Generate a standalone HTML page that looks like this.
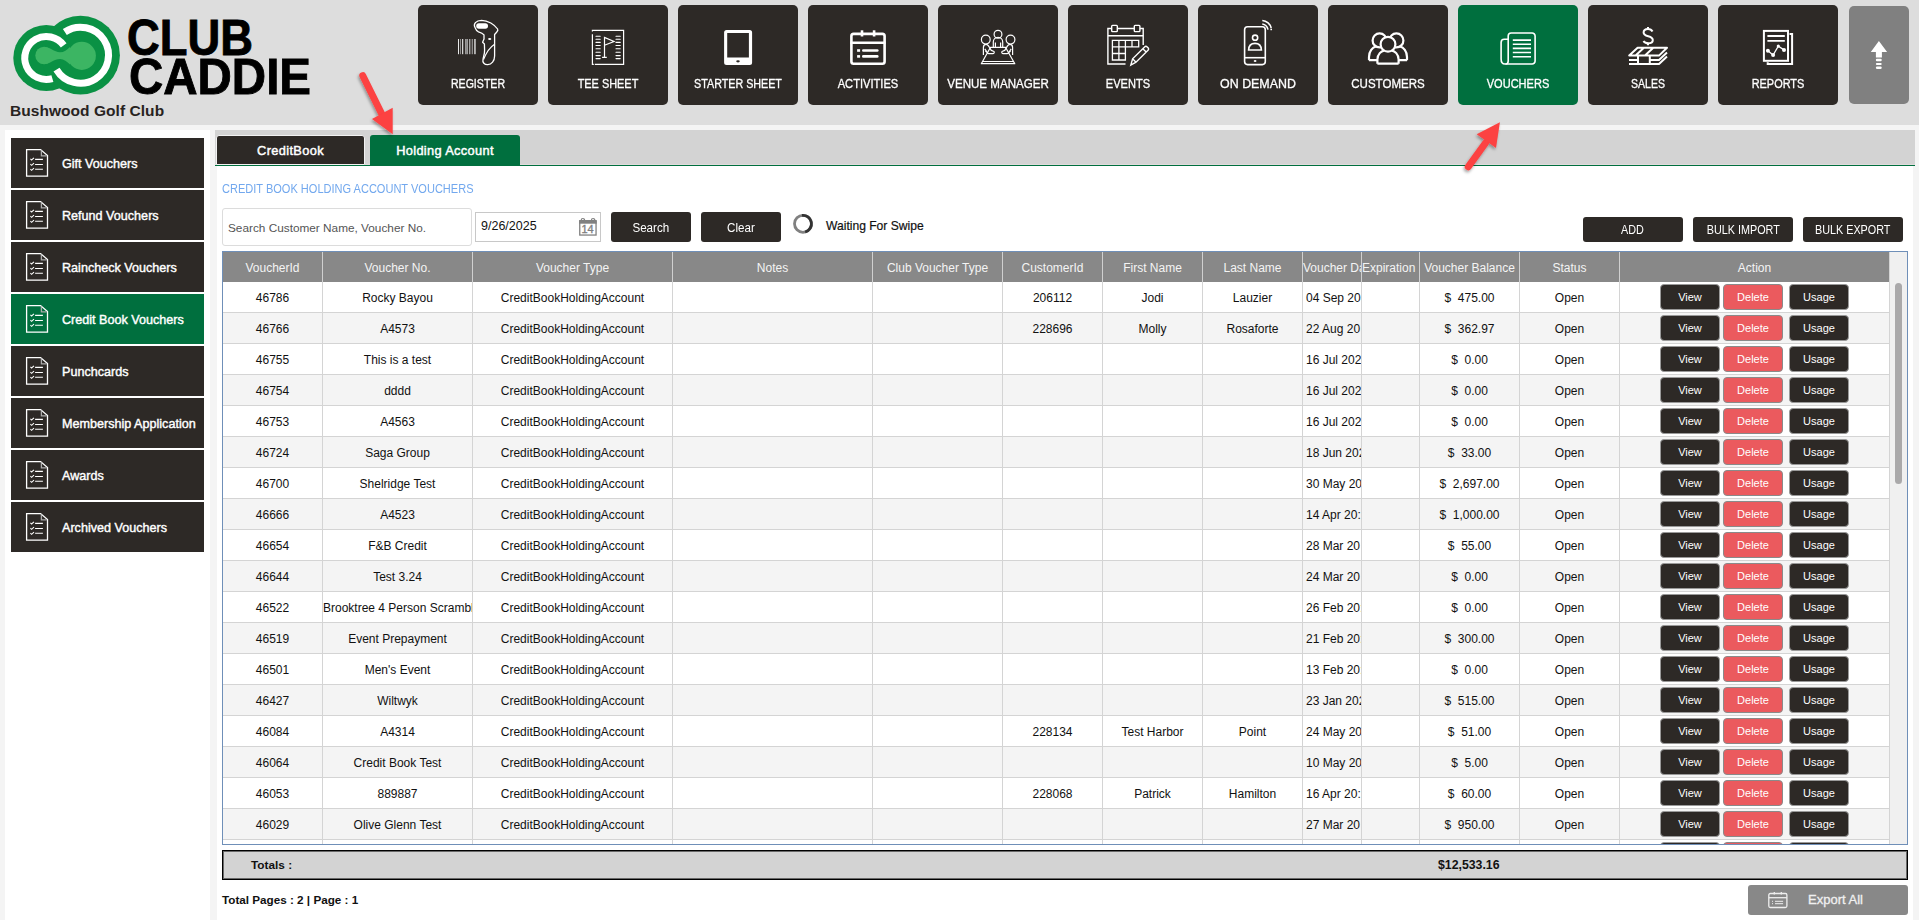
<!DOCTYPE html>
<html><head><meta charset="utf-8"><title>Vouchers</title><style>
*{box-sizing:border-box;margin:0;padding:0}
html,body{width:1919px;height:920px;overflow:hidden;background:#f4f4f4;font-family:"Liberation Sans", sans-serif;position:relative}
#header{position:absolute;left:0;top:0;width:1919px;height:125px;background:#dddddd}
#brand{position:absolute;left:10px;top:102px;font-weight:bold;font-size:15.5px;color:#28231f;white-space:nowrap;letter-spacing:0.05px}
.nav{position:absolute;top:5px;width:120px;height:100px;border-radius:5px;color:#fff}
.nav svg{position:absolute;left:0;top:0}
.nl{position:absolute;left:0;width:120px;top:72px;text-align:center;font-size:12.5px;font-weight:normal;-webkit-text-stroke:0.3px #fff;white-space:nowrap;line-height:14px;transform:scaleX(0.85);transform-origin:60px 0}
.navup{position:absolute;left:1849px;top:6px;width:60px;height:98px;border-radius:5px;background:#808080}
#sidepanel{position:absolute;left:5px;top:130px;width:205px;height:790px;background:#fff}
.sb{position:absolute;left:11px;width:193px;height:50px;color:#fff;overflow:hidden}
.sb svg{position:absolute;left:14px;top:10px}
.st{position:absolute;left:51px;top:19px;font-size:12.6px;font-weight:normal;-webkit-text-stroke:0.4px #fff;white-space:nowrap;line-height:14px}
#tabbar{position:absolute;left:215px;top:130px;width:1700px;height:35px;background:#d3d3d3;border-bottom:1px solid #e0dcdc}
#tabline{position:absolute;left:215px;top:165px;width:1700px;height:1px;background:#006f3e}
.tab{position:absolute;color:#fff;text-align:center;white-space:nowrap}
#tab1{left:216px;top:135px;width:149px;height:30px;background:#2d2926;border:1px solid #f2f2f2;border-radius:3px 3px 0 0;font-size:12.8px;letter-spacing:0.35px;-webkit-text-stroke:0.45px #fff;line-height:30px}
#tab2{left:370px;top:135px;width:150px;height:31px;background:#006f3e;border-radius:3px 3px 0 0;font-size:12.8px;letter-spacing:0.35px;-webkit-text-stroke:0.45px #fff;line-height:32px}
#content{position:absolute;left:217px;top:166px;width:1696px;height:754px;background:#fff}
#title{position:absolute;left:222px;top:182px;font-size:12.3px;color:#72a8ee;white-space:nowrap;line-height:14px;transform:scaleX(0.897);transform-origin:0 0}
#search{position:absolute;left:222px;top:208px;width:250px;height:38px;border:1px solid #dcdcdc;border-radius:3px;background:#fff}
#search span{position:absolute;left:5px;top:12px;font-size:11.8px;color:#555;white-space:nowrap;line-height:14px}
#date{position:absolute;left:475px;top:212px;width:126px;height:30px;border:1px solid #c8c8c8;background:#fff}
#date span{position:absolute;left:5px;top:6px;font-size:12.5px;color:#111;white-space:nowrap;line-height:14px}
#date svg{position:absolute;left:103px;top:5px}
.btn{position:absolute;background:#2d2926;color:#fff;border-radius:3px;text-align:center;font-size:11.5px;line-height:30px;white-space:nowrap}
.b2{top:217px;width:100px;height:25px;line-height:25px;font-size:11px}
.bs{display:inline-block;font-size:12.5px;line-height:32px;transform:scaleX(0.93)}
.bs2{display:inline-block;font-size:12.8px;line-height:26px;transform:scaleX(0.845)}
#wfs{position:absolute;left:826px;top:219px;font-size:12.1px;-webkit-text-stroke:0.2px #111;color:#111;white-space:nowrap;line-height:14px}
#tbl{position:absolute;left:222px;top:251px;width:1686px;height:594px;border:1px solid #6f8fb8;overflow:hidden;background:#fff}
#thead{position:absolute;left:0;top:0;width:1666px;height:30px;background:#888888}
.th{position:absolute;top:0;height:30px;line-height:32px;text-align:center;color:#f4f4f4;font-size:12px;border-left:1px solid #d0d0d0;white-space:nowrap;overflow:hidden}
.th:first-child{border-left:none}
.th.clip{text-align:left;padding-left:0}
.tr{position:absolute;left:0;width:1666px;height:31px;border-bottom:1px solid #d4d4d4}
.td{position:absolute;top:0;height:30px;line-height:32px;text-align:center;color:#111;font-size:12px;border-left:1px solid #d4d4d4;white-space:nowrap;overflow:hidden}
.tr .td:first-child{border-left:none}
.td.dl{text-align:left;padding-left:3px}
.ab{position:absolute;top:2px;width:60px;height:26px;border-radius:4px;background:#2d2926;color:#fff;font-size:11px;line-height:25px;text-align:center;border:1px solid #9a9a9a}
.ab.del{background:#eb5a5e;border-color:#8a8a8a}
#sbtrack{position:absolute;left:1666px;top:0;width:18px;height:592px;background:#f0f0f0;border-left:1px solid #d4d4d4}
#sbthumb{position:absolute;left:5px;top:31px;width:7px;height:201px;border-radius:4px;background:#aaa9aa}
#totals{position:absolute;left:222px;top:850px;width:1686px;height:30px;border:1px solid #000;box-shadow:inset 0 0 0 1px rgba(0,0,0,0.5);background:#d3d3d3}
#tl{position:absolute;left:28px;top:7px;font-weight:bold;font-size:11.8px;color:#111;line-height:14px}
#tv{position:absolute;left:1215px;top:7px;font-weight:bold;font-size:12.3px;color:#111;line-height:14px}
#pages{position:absolute;left:222px;top:893px;font-weight:bold;font-size:11.7px;color:#111;white-space:nowrap;line-height:14px}
#export{position:absolute;left:1748px;top:885px;width:160px;height:30px;border-radius:3px;background:#888;color:#f0f0f0}
#export span{position:absolute;left:60px;top:8px;font-size:13px;line-height:14px;-webkit-text-stroke:0.3px #f0f0f0}
#export svg{position:absolute;left:19px;top:6px}
#arrows{position:absolute;left:0;top:0}
</style></head>
<body><div id="header"></div><div id="brand">Bushwood Golf Club</div>
<svg style="position:absolute;left:0;top:0" width="320" height="100" viewBox="0 0 320 100">
<circle cx="46.3" cy="58" r="33" fill="#0a9144"/><circle cx="80.5" cy="55.2" r="39.4" fill="#0a9144"/>
<g fill="none" stroke="#fff" stroke-width="7">
<path d="M64.84 31.99 A28 28 0 1 1 56.5 69.6"/>
<path d="M63.7 45.4 A21.5 21.5 0 1 0 52.4 78.6"/>
</g>
<circle cx="44.1" cy="55.5" r="8.8" fill="#3cb563"/><circle cx="81.8" cy="55.85" r="14.1" fill="#3cb563"/>
<path d="M44 47 C50 47 54 52 60 52.3 C64 52.3 67 50 70 47 L70 64.5 C67 61.5 64 59 60 59 C54 59 50 64 44 64Z" fill="#3cb563"/>
<g font-family="Liberation Sans" font-weight="bold" font-size="50.5" fill="#000" stroke="#000" stroke-width="0.9">
<text x="127" y="54.8" textLength="126" lengthAdjust="spacingAndGlyphs">CLUB</text>
<text x="129" y="93.9" textLength="182" lengthAdjust="spacingAndGlyphs">CADDIE</text></g>
</svg><div class="nav" style="left:418px;background:#2d2926"><svg width="120" height="100" viewBox="0 0 120 100"><rect x="40.0" y="34" width="0.9" height="15.2" fill="#ffffff"/><rect x="42.3" y="34" width="0.7" height="15.2" fill="#bbb"/><rect x="44.2" y="34" width="1.0" height="15.2" fill="#ffffff"/><rect x="47.3" y="34" width="1.2" height="15.2" fill="#c8c8c8"/><rect x="48.7" y="34" width="1.2" height="15.2" fill="#aaa"/><rect x="51.3" y="34" width="1.0" height="15.2" fill="#ddd"/><rect x="53.8" y="34" width="0.8" height="15.2" fill="#ccc"/><rect x="56.3" y="34" width="1.3" height="15.2" fill="#eee"/><path d="M57 22.5 C55 19 58 15.5 63.5 15.3 C70 15.3 76.5 19.5 79.6 24 C80.2 25 79.8 26 78.6 27.2 L76.6 29.5 L76.6 51 C76.6 56 73.5 59.5 69.8 59.6 C66.5 59.8 64.2 57.5 65 54.3 C65.6 51.2 66.8 48 66.6 45 L66.4 39 L64.6 37.3 L66 34 L66 29.8 C64.5 28 62.2 27.3 60.5 26.8 C58.8 26.1 57.7 24.4 57 22.5Z" fill="none" stroke="#fff" stroke-width="1.3" stroke-linejoin="round"/><rect x="58.2" y="18.3" width="11.8" height="5.4" rx="2.7" fill="#fff"/><ellipse cx="71.7" cy="33.9" rx="1.6" ry="1" fill="#fff"/><path d="M76.3 39.4 C72 42 68.5 47 65.5 54.5" fill="none" stroke="#fff" stroke-width="1.2"/></svg><span class="nl" style="transform:scaleX(0.848)">REGISTER</span></div><div class="nav" style="left:548px;background:#2d2926"><svg width="120" height="100" viewBox="0 0 120 100"><g stroke="#fff" stroke-width="1.2" fill="none"><path d="M44.4 26.6 V25.3 H75.6 V59.4 H46.8 M44.4 29.3 V59.4 H45.8"/><g stroke-width="1.1" stroke-linecap="round"><line x1="48" y1="31.3" x2="52.2" y2="31.3"/><line x1="68" y1="31.3" x2="72.2" y2="31.3"/><line x1="48" y1="34.3" x2="52.2" y2="34.3"/><line x1="68" y1="34.3" x2="72.2" y2="34.3"/><line x1="48" y1="37.4" x2="52.2" y2="37.4"/><line x1="68" y1="37.4" x2="72.2" y2="37.4"/><line x1="48" y1="40.5" x2="52.2" y2="40.5"/><line x1="68" y1="40.5" x2="72.2" y2="40.5"/><line x1="48" y1="43.8" x2="52.2" y2="43.8"/><line x1="68" y1="43.8" x2="72.2" y2="43.8"/><line x1="48" y1="47.3" x2="52.2" y2="47.3"/><line x1="68" y1="47.3" x2="72.2" y2="47.3"/><line x1="48" y1="50.6" x2="52.2" y2="50.6"/><line x1="68" y1="50.6" x2="72.2" y2="50.6"/><line x1="48" y1="53.6" x2="52.2" y2="53.6"/><line x1="68" y1="53.6" x2="72.2" y2="53.6"/></g><path d="M56.5 52.5 V32.5 L66 36.5 L56.5 40.2 M54.1 52.4 H58.8"/></g></svg><span class="nl" style="transform:scaleX(0.873)">TEE SHEET</span></div><div class="nav" style="left:678px;background:#2d2926"><svg width="120" height="100" viewBox="0 0 120 100"><path fill="#fff" fill-rule="evenodd" d="M48.6 25 H71.6 A2.5 2.5 0 0 1 74.1 27.5 V57.6 A2.5 2.5 0 0 1 71.6 60.1 H48.6 A2.5 2.5 0 0 1 46.1 57.6 V27.5 A2.5 2.5 0 0 1 48.6 25Z M49.2 28 V52.5 H70.9 V28Z"/><ellipse cx="60" cy="56.3" rx="1.8" ry="1.1" fill="#2d2926"/></svg><span class="nl" style="transform:scaleX(0.858)">STARTER SHEET</span></div><div class="nav" style="left:808px;background:#2d2926"><svg width="120" height="100" viewBox="0 0 120 100"><g stroke="#fff" fill="none" stroke-width="2.6"><rect x="43.4" y="28.9" width="33.2" height="29.8" rx="2.2"/><line x1="42.5" y1="37.8" x2="77.5" y2="37.8"/><line x1="54" y1="25.3" x2="54" y2="31.5"/><line x1="66.1" y1="25.3" x2="66.1" y2="31.5"/></g><g fill="#fff"><rect x="49.1" y="44.2" width="3" height="2.6"/><rect x="49.1" y="50.1" width="3" height="2.6"/><rect x="54" y="44.2" width="16.6" height="2.6" rx="1.3"/><rect x="54" y="50.1" width="16.6" height="2.6" rx="1.3"/></g></svg><span class="nl" style="transform:scaleX(0.89)">ACTIVITIES</span></div><div class="nav" style="left:938px;background:#2d2926"><svg width="120" height="100" viewBox="0 0 120 100"><g stroke="#fff" fill="none" stroke-width="1.2" stroke-linejoin="round"><circle cx="60" cy="29.2" r="3.9"/><circle cx="47.8" cy="34.6" r="4.4"/><circle cx="72.5" cy="34.6" r="4.4"/><path d="M55.3 42 V37 A4.7 4.7 0 0 1 64.7 37 V42 M57.4 42 V37.6 M62.6 37.6 V42"/><path d="M52.5 42.3 H67.5 L76.8 58.7 H43.3 Z M44.6 56.5 H75.5"/><path d="M45.4 50 V42.5 C45.4 40 46.5 39.4 48 39.4 C49.5 39.4 50.8 41 51.5 42.6 L53.3 45.4 L56 46.5 C56.6 47.6 56 48.6 54.8 48.6 H50.5 L47.4 46 M46.8 43.8 L50 48.6"/><path d="M74.6 50 V42.5 C74.6 40 73.5 39.4 72 39.4 C70.5 39.4 69.2 41 68.5 42.6 L66.7 45.4 L64 46.5 C63.4 47.6 64 48.6 65.2 48.6 H69.5 L72.6 46 M73.2 43.8 L70 48.6"/></g></svg><span class="nl" style="transform:scaleX(0.926)">VENUE MANAGER</span></div><div class="nav" style="left:1068px;background:#2d2926"><svg width="120" height="100" viewBox="0 0 120 100"><g stroke="#fff" fill="none" stroke-width="1.4"><path d="M57.5 59 H39.9 V23.5 H75.2 V40"/><line x1="39.9" y1="30.8" x2="75.2" y2="30.8"/><rect x="43.7" y="20.4" width="5.6" height="6.2" rx="0.8" fill="#2d2926"/><rect x="66.3" y="20.4" width="5.6" height="6.2" rx="0.8" fill="#2d2926"/><path transform="translate(-0.6 0.6)" d="M63.4 59.5 L65.2 53.2 L77.2 41.3 C78 40.5 79 40.5 79.8 41.3 L80.6 42.1 C81.4 42.9 81.4 43.9 80.6 44.7 L68.6 56.6 Z M65.2 53.2 L68.6 56.6 M75.4 43.1 L78.8 46.5"/></g><g stroke="#fff" fill="none" stroke-width="1.3"><path d="M44.4 35.3 H70.7 V41.9 H57.4 V55 H44.4 Z M50.9 35.3 V55 M57.4 35.3 V41.9 M64 35.3 V41.9 M44.4 41.9 H57.4 M44.4 48.5 H57.4"/></g></svg><span class="nl" style="transform:scaleX(0.886)">EVENTS</span></div><div class="nav" style="left:1198px;background:#2d2926"><svg width="120" height="100" viewBox="0 0 120 100"><g stroke="#fff" fill="none" stroke-width="1.6"><rect x="46.6" y="21.8" width="20.7" height="37.8" rx="3"/><line x1="46.6" y1="52.7" x2="67.3" y2="52.7"/><circle cx="57.1" cy="32.7" r="2.6"/><path d="M50.6 45 C50.8 40.5 53.5 38.4 57 38.4 C60.5 38.4 63.2 40.5 63.4 45 Z"/><path d="M64.3 19 C67 19.4 69.3 21.6 70 24.6"/><path d="M64.3 15.5 C68.7 15.8 72.4 19.3 73.2 23"/></g><ellipse cx="57.1" cy="56" rx="1.4" ry="0.9" fill="#fff"/><circle cx="73.2" cy="24.4" r="0.9" fill="#fff"/></svg><span class="nl" style="transform:scaleX(0.993)">ON DEMAND</span></div><div class="nav" style="left:1328px;background:#2d2926"><svg width="120" height="100" viewBox="0 0 120 100"><g stroke="#fff" fill="#2d2926" stroke-width="2.2" stroke-linejoin="round"><path d="M41 55.2 V52 C41 46 44.5 42.3 48 41.5 M79 55.2 V52 C79 46 75.5 42.3 72 41.5 M41 55.2 H49.4 M79 55.2 H70.6" fill="none"/><circle cx="51.6" cy="35.4" r="7"/><circle cx="68.4" cy="35.4" r="7"/><circle cx="60" cy="39.2" r="7.4"/><path d="M49.4 58.7 V54.5 C49.4 49 53.5 46 56 45.6 M70.6 58.7 V54.5 C70.6 49 66.5 46 64 45.6 M49.4 58.7 H70.6" fill="none"/></g></svg><span class="nl" style="transform:scaleX(0.922)">CUSTOMERS</span></div><div class="nav" style="left:1458px;background:#006f3e"><svg width="120" height="100" viewBox="0 0 120 100"><g stroke="#fff" fill="none" stroke-width="1.6"><path d="M50.2 56 V31 A3 3 0 0 1 53.2 28 H74.1 A3 3 0 0 1 77.1 31 V56 A3 3 0 0 1 74.1 59 H47 C44.5 59 43.1 57 43.1 54 V37.5 C43.1 35.5 44.3 34.3 46.3 34.3 H50.2"/><path d="M50.2 56 C50.2 57.8 49.4 59 47.5 59"/><path d="M54.8 35.1 H73 M54.8 39.3 H73 M54.8 43.4 H73 M54.8 47.5 H73 M54.8 51.8 H73"/></g></svg><span class="nl" style="transform:scaleX(0.883)">VOUCHERS</span></div><div class="nav" style="left:1588px;background:#2d2926"><svg width="120" height="100" viewBox="0 0 120 100"><g stroke="#fff" fill="none" stroke-width="2" stroke-linejoin="round"><path d="M64.5 26.5 C63.5 24.5 62 24 60 24 C57.3 24 55.6 25.4 55.6 27.5 C55.6 32.5 64.8 30 64.8 35 C64.8 37.3 63 38.3 60.3 38.3 C58 38.3 56.5 37.8 55.5 36"/><line x1="60" y1="22" x2="60" y2="24"/><line x1="60" y1="38.3" x2="60" y2="40.3"/><path d="M41.2 50.6 L49.6 42.7 H79 L71 50.6 Z M55.6 43 L47.6 50.5 M65 43 L57 50.5"/><path d="M41 55 H50 M61.8 55 H71 L79 47.6 M41 59 H71 L79 51.5 M50 51 V58.6 M61.8 51 V58.6 M71 50.6 V51"/></g></svg><span class="nl" style="transform:scaleX(0.843)">SALES</span></div><div class="nav" style="left:1718px;background:#2d2926"><svg width="120" height="100" viewBox="0 0 120 100"><g stroke="#fff" fill="none" stroke-width="2"><rect x="45.9" y="25.9" width="24.1" height="29.9"/><path d="M71.5 29 H74.1 V59 H49.7 V57.2"/><path d="M49.4 31 H66.8 M49.4 35.9 H66.8" stroke-width="1.9"/><path d="M49.9 45.7 L55.1 50.1 L60.3 41.1 L66 44.9" stroke-width="1.3"/></g><g fill="#fff"><circle cx="49.9" cy="45.7" r="2"/><circle cx="55.1" cy="50.1" r="2"/><circle cx="60.3" cy="41.1" r="1.6"/><circle cx="66" cy="44.9" r="2"/></g></svg><span class="nl" style="transform:scaleX(0.875)">REPORTS</span></div><div class="navup"><svg width="60" height="98" viewBox="0 0 60 98" style="position:absolute;left:0;top:0"><g fill="#fff"><path d="M29.9 35.1 L38.1 46 H32.9 V51.4 H26.9 V46 H21.8 Z"/><rect x="26.9" y="52.8" width="5.8" height="2.5" rx="1"/><rect x="26.9" y="56.9" width="5.8" height="2.2" rx="1"/><rect x="26.9" y="60.4" width="5.8" height="2.5" rx="1.2"/></g></svg></div><div id="sidepanel"></div><div class="sb" style="top:138px;background:#2d2926"><svg width="50" height="50" viewBox="0 0 50 50" style="position:absolute;left:0;top:0"><g stroke="#fff" fill="none" stroke-width="1.3"><path d="M15.6 11.6 H29.6 L36.5 17.6 V38.2 H15.6 Z"/><path d="M30.4 12.5 V17.8 H35.7" stroke="#aaa"/><path d="M19.4 20.8 L20.6 21.9 L23 19.8 M19.4 26.2 L20.6 27.3 L23 25.2 M19.4 31.2 L20.6 32.3 L23 30.2" stroke-width="1.1"/><path d="M24.1 21.4 H31.9 M24.1 26.5 H31.9 M24.1 31.3 H31.9" stroke-width="1.1"/></g></svg><span class="st">Gift Vouchers</span></div><div class="sb" style="top:190px;background:#2d2926"><svg width="50" height="50" viewBox="0 0 50 50" style="position:absolute;left:0;top:0"><g stroke="#fff" fill="none" stroke-width="1.3"><path d="M15.6 11.6 H29.6 L36.5 17.6 V38.2 H15.6 Z"/><path d="M30.4 12.5 V17.8 H35.7" stroke="#aaa"/><path d="M19.4 20.8 L20.6 21.9 L23 19.8 M19.4 26.2 L20.6 27.3 L23 25.2 M19.4 31.2 L20.6 32.3 L23 30.2" stroke-width="1.1"/><path d="M24.1 21.4 H31.9 M24.1 26.5 H31.9 M24.1 31.3 H31.9" stroke-width="1.1"/></g></svg><span class="st">Refund Vouchers</span></div><div class="sb" style="top:242px;background:#2d2926"><svg width="50" height="50" viewBox="0 0 50 50" style="position:absolute;left:0;top:0"><g stroke="#fff" fill="none" stroke-width="1.3"><path d="M15.6 11.6 H29.6 L36.5 17.6 V38.2 H15.6 Z"/><path d="M30.4 12.5 V17.8 H35.7" stroke="#aaa"/><path d="M19.4 20.8 L20.6 21.9 L23 19.8 M19.4 26.2 L20.6 27.3 L23 25.2 M19.4 31.2 L20.6 32.3 L23 30.2" stroke-width="1.1"/><path d="M24.1 21.4 H31.9 M24.1 26.5 H31.9 M24.1 31.3 H31.9" stroke-width="1.1"/></g></svg><span class="st">Raincheck Vouchers</span></div><div class="sb" style="top:294px;background:#006f3e"><svg width="50" height="50" viewBox="0 0 50 50" style="position:absolute;left:0;top:0"><g stroke="#fff" fill="none" stroke-width="1.3"><path d="M15.6 11.6 H29.6 L36.5 17.6 V38.2 H15.6 Z"/><path d="M30.4 12.5 V17.8 H35.7" stroke="#aaa"/><path d="M19.4 20.8 L20.6 21.9 L23 19.8 M19.4 26.2 L20.6 27.3 L23 25.2 M19.4 31.2 L20.6 32.3 L23 30.2" stroke-width="1.1"/><path d="M24.1 21.4 H31.9 M24.1 26.5 H31.9 M24.1 31.3 H31.9" stroke-width="1.1"/></g></svg><span class="st">Credit Book Vouchers</span></div><div class="sb" style="top:346px;background:#2d2926"><svg width="50" height="50" viewBox="0 0 50 50" style="position:absolute;left:0;top:0"><g stroke="#fff" fill="none" stroke-width="1.3"><path d="M15.6 11.6 H29.6 L36.5 17.6 V38.2 H15.6 Z"/><path d="M30.4 12.5 V17.8 H35.7" stroke="#aaa"/><path d="M19.4 20.8 L20.6 21.9 L23 19.8 M19.4 26.2 L20.6 27.3 L23 25.2 M19.4 31.2 L20.6 32.3 L23 30.2" stroke-width="1.1"/><path d="M24.1 21.4 H31.9 M24.1 26.5 H31.9 M24.1 31.3 H31.9" stroke-width="1.1"/></g></svg><span class="st">Punchcards</span></div><div class="sb" style="top:398px;background:#2d2926"><svg width="50" height="50" viewBox="0 0 50 50" style="position:absolute;left:0;top:0"><g stroke="#fff" fill="none" stroke-width="1.3"><path d="M15.6 11.6 H29.6 L36.5 17.6 V38.2 H15.6 Z"/><path d="M30.4 12.5 V17.8 H35.7" stroke="#aaa"/><path d="M19.4 20.8 L20.6 21.9 L23 19.8 M19.4 26.2 L20.6 27.3 L23 25.2 M19.4 31.2 L20.6 32.3 L23 30.2" stroke-width="1.1"/><path d="M24.1 21.4 H31.9 M24.1 26.5 H31.9 M24.1 31.3 H31.9" stroke-width="1.1"/></g></svg><span class="st">Membership Application</span></div><div class="sb" style="top:450px;background:#2d2926"><svg width="50" height="50" viewBox="0 0 50 50" style="position:absolute;left:0;top:0"><g stroke="#fff" fill="none" stroke-width="1.3"><path d="M15.6 11.6 H29.6 L36.5 17.6 V38.2 H15.6 Z"/><path d="M30.4 12.5 V17.8 H35.7" stroke="#aaa"/><path d="M19.4 20.8 L20.6 21.9 L23 19.8 M19.4 26.2 L20.6 27.3 L23 25.2 M19.4 31.2 L20.6 32.3 L23 30.2" stroke-width="1.1"/><path d="M24.1 21.4 H31.9 M24.1 26.5 H31.9 M24.1 31.3 H31.9" stroke-width="1.1"/></g></svg><span class="st">Awards</span></div><div class="sb" style="top:502px;background:#2d2926"><svg width="50" height="50" viewBox="0 0 50 50" style="position:absolute;left:0;top:0"><g stroke="#fff" fill="none" stroke-width="1.3"><path d="M15.6 11.6 H29.6 L36.5 17.6 V38.2 H15.6 Z"/><path d="M30.4 12.5 V17.8 H35.7" stroke="#aaa"/><path d="M19.4 20.8 L20.6 21.9 L23 19.8 M19.4 26.2 L20.6 27.3 L23 25.2 M19.4 31.2 L20.6 32.3 L23 30.2" stroke-width="1.1"/><path d="M24.1 21.4 H31.9 M24.1 26.5 H31.9 M24.1 31.3 H31.9" stroke-width="1.1"/></g></svg><span class="st">Archived Vouchers</span></div><div id="tabbar"></div><div id="tabline"></div><div class="tab" id="tab1">CreditBook</div><div class="tab" id="tab2">Holding Account</div><div id="content"></div><div id="title">CREDIT BOOK HOLDING ACCOUNT VOUCHERS</div><div id="search"><span>Search Customer Name, Voucher No.</span></div><div id="date"><span>9/26/2025</span><svg width="126" height="30" viewBox="0 0 126 30" style="position:absolute;left:-1px;top:-1px"><g stroke="#808080" fill="none" stroke-width="1.3"><rect x="104.75" y="8.65" width="16.3" height="14.4"/><path d="M106.2 9 V8.2 A1.7 1.7 0 0 1 109.6 8.2 V9 M116.4 9 V8.2 A1.7 1.7 0 0 1 119.8 8.2 V9" stroke-width="1.2"/></g><rect x="104.1" y="8.6" width="17.6" height="3.1" fill="#808080"/><text x="112.6" y="21.3" font-family="Liberation Sans" font-size="11" fill="#808080" stroke="#808080" stroke-width="0.35" text-anchor="middle">14</text></svg></div><div class="btn" style="left:611px;top:212px;width:80px;height:30px"><span class="bs">Search</span></div><div class="btn" style="left:701px;top:212px;width:80px;height:30px"><span class="bs">Clear</span></div><svg id="spin" width="24" height="24" viewBox="0 0 24 24" style="position:absolute;left:791px;top:212px"><circle cx="12" cy="11.8" r="8.5" fill="none" stroke="#808080" stroke-width="2.8"/><path d="M10.96 3.36 A8.5 8.5 0 0 1 14.2 20.0" fill="none" stroke="#333" stroke-width="2.8"/></svg><div id="wfs">Waiting For Swipe</div><div class="btn b2" style="left:1583px"><span class="bs2">ADD</span></div><div class="btn b2" style="left:1693px"><span class="bs2">BULK IMPORT</span></div><div class="btn b2" style="left:1803px"><span class="bs2">BULK EXPORT</span></div><div id="tbl"><div id="thead"><div class="th" style="left:0px;width:99px">VoucherId</div><div class="th" style="left:99px;width:150px">Voucher No.</div><div class="th" style="left:249px;width:200px">Voucher Type</div><div class="th" style="left:449px;width:200px">Notes</div><div class="th" style="left:649px;width:130px">Club Voucher Type</div><div class="th" style="left:779px;width:100px">CustomerId</div><div class="th" style="left:879px;width:100px">First Name</div><div class="th" style="left:979px;width:100px">Last Name</div><div class="th clip" style="left:1079px;width:59px">Voucher Date</div><div class="th clip" style="left:1138px;width:58px">Expiration Date</div><div class="th" style="left:1196px;width:100px">Voucher Balance</div><div class="th" style="left:1296px;width:100px">Status</div><div class="th" style="left:1396px;width:270px">Action</div></div><div class="tr" style="top:30px;background:#ffffff"><div class="td" style="left:0px;width:99px">46786</div><div class="td" style="left:99px;width:150px">Rocky Bayou</div><div class="td" style="left:249px;width:200px">CreditBookHoldingAccount</div><div class="td" style="left:449px;width:200px"></div><div class="td" style="left:649px;width:130px"></div><div class="td" style="left:779px;width:100px">206112</div><div class="td" style="left:879px;width:100px">Jodi</div><div class="td" style="left:979px;width:100px">Lauzier</div><div class="td dl" style="left:1079px;width:59px">04 Sep 20:</div><div class="td" style="left:1138px;width:58px"></div><div class="td" style="left:1196px;width:100px">$&nbsp; 475.00</div><div class="td" style="left:1296px;width:100px">Open</div><div class="td" style="left:1396px;width:270px"></div><div class="ab" style="left:1437px">View</div><div class="ab del" style="left:1500px">Delete</div><div class="ab" style="left:1566px">Usage</div></div><div class="tr" style="top:61px;background:#f4f4f4"><div class="td" style="left:0px;width:99px">46766</div><div class="td" style="left:99px;width:150px">A4573</div><div class="td" style="left:249px;width:200px">CreditBookHoldingAccount</div><div class="td" style="left:449px;width:200px"></div><div class="td" style="left:649px;width:130px"></div><div class="td" style="left:779px;width:100px">228696</div><div class="td" style="left:879px;width:100px">Molly</div><div class="td" style="left:979px;width:100px">Rosaforte</div><div class="td dl" style="left:1079px;width:59px">22 Aug 20</div><div class="td" style="left:1138px;width:58px"></div><div class="td" style="left:1196px;width:100px">$&nbsp; 362.97</div><div class="td" style="left:1296px;width:100px">Open</div><div class="td" style="left:1396px;width:270px"></div><div class="ab" style="left:1437px">View</div><div class="ab del" style="left:1500px">Delete</div><div class="ab" style="left:1566px">Usage</div></div><div class="tr" style="top:92px;background:#ffffff"><div class="td" style="left:0px;width:99px">46755</div><div class="td" style="left:99px;width:150px">This is a test</div><div class="td" style="left:249px;width:200px">CreditBookHoldingAccount</div><div class="td" style="left:449px;width:200px"></div><div class="td" style="left:649px;width:130px"></div><div class="td" style="left:779px;width:100px"></div><div class="td" style="left:879px;width:100px"></div><div class="td" style="left:979px;width:100px"></div><div class="td dl" style="left:1079px;width:59px">16 Jul 202</div><div class="td" style="left:1138px;width:58px"></div><div class="td" style="left:1196px;width:100px">$&nbsp; 0.00</div><div class="td" style="left:1296px;width:100px">Open</div><div class="td" style="left:1396px;width:270px"></div><div class="ab" style="left:1437px">View</div><div class="ab del" style="left:1500px">Delete</div><div class="ab" style="left:1566px">Usage</div></div><div class="tr" style="top:123px;background:#f4f4f4"><div class="td" style="left:0px;width:99px">46754</div><div class="td" style="left:99px;width:150px">dddd</div><div class="td" style="left:249px;width:200px">CreditBookHoldingAccount</div><div class="td" style="left:449px;width:200px"></div><div class="td" style="left:649px;width:130px"></div><div class="td" style="left:779px;width:100px"></div><div class="td" style="left:879px;width:100px"></div><div class="td" style="left:979px;width:100px"></div><div class="td dl" style="left:1079px;width:59px">16 Jul 202</div><div class="td" style="left:1138px;width:58px"></div><div class="td" style="left:1196px;width:100px">$&nbsp; 0.00</div><div class="td" style="left:1296px;width:100px">Open</div><div class="td" style="left:1396px;width:270px"></div><div class="ab" style="left:1437px">View</div><div class="ab del" style="left:1500px">Delete</div><div class="ab" style="left:1566px">Usage</div></div><div class="tr" style="top:154px;background:#ffffff"><div class="td" style="left:0px;width:99px">46753</div><div class="td" style="left:99px;width:150px">A4563</div><div class="td" style="left:249px;width:200px">CreditBookHoldingAccount</div><div class="td" style="left:449px;width:200px"></div><div class="td" style="left:649px;width:130px"></div><div class="td" style="left:779px;width:100px"></div><div class="td" style="left:879px;width:100px"></div><div class="td" style="left:979px;width:100px"></div><div class="td dl" style="left:1079px;width:59px">16 Jul 202</div><div class="td" style="left:1138px;width:58px"></div><div class="td" style="left:1196px;width:100px">$&nbsp; 0.00</div><div class="td" style="left:1296px;width:100px">Open</div><div class="td" style="left:1396px;width:270px"></div><div class="ab" style="left:1437px">View</div><div class="ab del" style="left:1500px">Delete</div><div class="ab" style="left:1566px">Usage</div></div><div class="tr" style="top:185px;background:#f4f4f4"><div class="td" style="left:0px;width:99px">46724</div><div class="td" style="left:99px;width:150px">Saga Group</div><div class="td" style="left:249px;width:200px">CreditBookHoldingAccount</div><div class="td" style="left:449px;width:200px"></div><div class="td" style="left:649px;width:130px"></div><div class="td" style="left:779px;width:100px"></div><div class="td" style="left:879px;width:100px"></div><div class="td" style="left:979px;width:100px"></div><div class="td dl" style="left:1079px;width:59px">18 Jun 202</div><div class="td" style="left:1138px;width:58px"></div><div class="td" style="left:1196px;width:100px">$&nbsp; 33.00</div><div class="td" style="left:1296px;width:100px">Open</div><div class="td" style="left:1396px;width:270px"></div><div class="ab" style="left:1437px">View</div><div class="ab del" style="left:1500px">Delete</div><div class="ab" style="left:1566px">Usage</div></div><div class="tr" style="top:216px;background:#ffffff"><div class="td" style="left:0px;width:99px">46700</div><div class="td" style="left:99px;width:150px">Shelridge Test</div><div class="td" style="left:249px;width:200px">CreditBookHoldingAccount</div><div class="td" style="left:449px;width:200px"></div><div class="td" style="left:649px;width:130px"></div><div class="td" style="left:779px;width:100px"></div><div class="td" style="left:879px;width:100px"></div><div class="td" style="left:979px;width:100px"></div><div class="td dl" style="left:1079px;width:59px">30 May 20</div><div class="td" style="left:1138px;width:58px"></div><div class="td" style="left:1196px;width:100px">$&nbsp; 2,697.00</div><div class="td" style="left:1296px;width:100px">Open</div><div class="td" style="left:1396px;width:270px"></div><div class="ab" style="left:1437px">View</div><div class="ab del" style="left:1500px">Delete</div><div class="ab" style="left:1566px">Usage</div></div><div class="tr" style="top:247px;background:#f4f4f4"><div class="td" style="left:0px;width:99px">46666</div><div class="td" style="left:99px;width:150px">A4523</div><div class="td" style="left:249px;width:200px">CreditBookHoldingAccount</div><div class="td" style="left:449px;width:200px"></div><div class="td" style="left:649px;width:130px"></div><div class="td" style="left:779px;width:100px"></div><div class="td" style="left:879px;width:100px"></div><div class="td" style="left:979px;width:100px"></div><div class="td dl" style="left:1079px;width:59px">14 Apr 20:</div><div class="td" style="left:1138px;width:58px"></div><div class="td" style="left:1196px;width:100px">$&nbsp; 1,000.00</div><div class="td" style="left:1296px;width:100px">Open</div><div class="td" style="left:1396px;width:270px"></div><div class="ab" style="left:1437px">View</div><div class="ab del" style="left:1500px">Delete</div><div class="ab" style="left:1566px">Usage</div></div><div class="tr" style="top:278px;background:#ffffff"><div class="td" style="left:0px;width:99px">46654</div><div class="td" style="left:99px;width:150px">F&amp;B Credit</div><div class="td" style="left:249px;width:200px">CreditBookHoldingAccount</div><div class="td" style="left:449px;width:200px"></div><div class="td" style="left:649px;width:130px"></div><div class="td" style="left:779px;width:100px"></div><div class="td" style="left:879px;width:100px"></div><div class="td" style="left:979px;width:100px"></div><div class="td dl" style="left:1079px;width:59px">28 Mar 20</div><div class="td" style="left:1138px;width:58px"></div><div class="td" style="left:1196px;width:100px">$&nbsp; 55.00</div><div class="td" style="left:1296px;width:100px">Open</div><div class="td" style="left:1396px;width:270px"></div><div class="ab" style="left:1437px">View</div><div class="ab del" style="left:1500px">Delete</div><div class="ab" style="left:1566px">Usage</div></div><div class="tr" style="top:309px;background:#f4f4f4"><div class="td" style="left:0px;width:99px">46644</div><div class="td" style="left:99px;width:150px">Test 3.24</div><div class="td" style="left:249px;width:200px">CreditBookHoldingAccount</div><div class="td" style="left:449px;width:200px"></div><div class="td" style="left:649px;width:130px"></div><div class="td" style="left:779px;width:100px"></div><div class="td" style="left:879px;width:100px"></div><div class="td" style="left:979px;width:100px"></div><div class="td dl" style="left:1079px;width:59px">24 Mar 20</div><div class="td" style="left:1138px;width:58px"></div><div class="td" style="left:1196px;width:100px">$&nbsp; 0.00</div><div class="td" style="left:1296px;width:100px">Open</div><div class="td" style="left:1396px;width:270px"></div><div class="ab" style="left:1437px">View</div><div class="ab del" style="left:1500px">Delete</div><div class="ab" style="left:1566px">Usage</div></div><div class="tr" style="top:340px;background:#ffffff"><div class="td" style="left:0px;width:99px">46522</div><div class="td" style="left:99px;width:150px">Brooktree 4 Person Scrambl</div><div class="td" style="left:249px;width:200px">CreditBookHoldingAccount</div><div class="td" style="left:449px;width:200px"></div><div class="td" style="left:649px;width:130px"></div><div class="td" style="left:779px;width:100px"></div><div class="td" style="left:879px;width:100px"></div><div class="td" style="left:979px;width:100px"></div><div class="td dl" style="left:1079px;width:59px">26 Feb 20:</div><div class="td" style="left:1138px;width:58px"></div><div class="td" style="left:1196px;width:100px">$&nbsp; 0.00</div><div class="td" style="left:1296px;width:100px">Open</div><div class="td" style="left:1396px;width:270px"></div><div class="ab" style="left:1437px">View</div><div class="ab del" style="left:1500px">Delete</div><div class="ab" style="left:1566px">Usage</div></div><div class="tr" style="top:371px;background:#f4f4f4"><div class="td" style="left:0px;width:99px">46519</div><div class="td" style="left:99px;width:150px">Event Prepayment</div><div class="td" style="left:249px;width:200px">CreditBookHoldingAccount</div><div class="td" style="left:449px;width:200px"></div><div class="td" style="left:649px;width:130px"></div><div class="td" style="left:779px;width:100px"></div><div class="td" style="left:879px;width:100px"></div><div class="td" style="left:979px;width:100px"></div><div class="td dl" style="left:1079px;width:59px">21 Feb 20:</div><div class="td" style="left:1138px;width:58px"></div><div class="td" style="left:1196px;width:100px">$&nbsp; 300.00</div><div class="td" style="left:1296px;width:100px">Open</div><div class="td" style="left:1396px;width:270px"></div><div class="ab" style="left:1437px">View</div><div class="ab del" style="left:1500px">Delete</div><div class="ab" style="left:1566px">Usage</div></div><div class="tr" style="top:402px;background:#ffffff"><div class="td" style="left:0px;width:99px">46501</div><div class="td" style="left:99px;width:150px">Men's Event</div><div class="td" style="left:249px;width:200px">CreditBookHoldingAccount</div><div class="td" style="left:449px;width:200px"></div><div class="td" style="left:649px;width:130px"></div><div class="td" style="left:779px;width:100px"></div><div class="td" style="left:879px;width:100px"></div><div class="td" style="left:979px;width:100px"></div><div class="td dl" style="left:1079px;width:59px">13 Feb 20:</div><div class="td" style="left:1138px;width:58px"></div><div class="td" style="left:1196px;width:100px">$&nbsp; 0.00</div><div class="td" style="left:1296px;width:100px">Open</div><div class="td" style="left:1396px;width:270px"></div><div class="ab" style="left:1437px">View</div><div class="ab del" style="left:1500px">Delete</div><div class="ab" style="left:1566px">Usage</div></div><div class="tr" style="top:433px;background:#f4f4f4"><div class="td" style="left:0px;width:99px">46427</div><div class="td" style="left:99px;width:150px">Wiltwyk</div><div class="td" style="left:249px;width:200px">CreditBookHoldingAccount</div><div class="td" style="left:449px;width:200px"></div><div class="td" style="left:649px;width:130px"></div><div class="td" style="left:779px;width:100px"></div><div class="td" style="left:879px;width:100px"></div><div class="td" style="left:979px;width:100px"></div><div class="td dl" style="left:1079px;width:59px">23 Jan 202</div><div class="td" style="left:1138px;width:58px"></div><div class="td" style="left:1196px;width:100px">$&nbsp; 515.00</div><div class="td" style="left:1296px;width:100px">Open</div><div class="td" style="left:1396px;width:270px"></div><div class="ab" style="left:1437px">View</div><div class="ab del" style="left:1500px">Delete</div><div class="ab" style="left:1566px">Usage</div></div><div class="tr" style="top:464px;background:#ffffff"><div class="td" style="left:0px;width:99px">46084</div><div class="td" style="left:99px;width:150px">A4314</div><div class="td" style="left:249px;width:200px">CreditBookHoldingAccount</div><div class="td" style="left:449px;width:200px"></div><div class="td" style="left:649px;width:130px"></div><div class="td" style="left:779px;width:100px">228134</div><div class="td" style="left:879px;width:100px">Test Harbor</div><div class="td" style="left:979px;width:100px">Point</div><div class="td dl" style="left:1079px;width:59px">24 May 20</div><div class="td" style="left:1138px;width:58px"></div><div class="td" style="left:1196px;width:100px">$&nbsp; 51.00</div><div class="td" style="left:1296px;width:100px">Open</div><div class="td" style="left:1396px;width:270px"></div><div class="ab" style="left:1437px">View</div><div class="ab del" style="left:1500px">Delete</div><div class="ab" style="left:1566px">Usage</div></div><div class="tr" style="top:495px;background:#f4f4f4"><div class="td" style="left:0px;width:99px">46064</div><div class="td" style="left:99px;width:150px">Credit Book Test</div><div class="td" style="left:249px;width:200px">CreditBookHoldingAccount</div><div class="td" style="left:449px;width:200px"></div><div class="td" style="left:649px;width:130px"></div><div class="td" style="left:779px;width:100px"></div><div class="td" style="left:879px;width:100px"></div><div class="td" style="left:979px;width:100px"></div><div class="td dl" style="left:1079px;width:59px">10 May 20</div><div class="td" style="left:1138px;width:58px"></div><div class="td" style="left:1196px;width:100px">$&nbsp; 5.00</div><div class="td" style="left:1296px;width:100px">Open</div><div class="td" style="left:1396px;width:270px"></div><div class="ab" style="left:1437px">View</div><div class="ab del" style="left:1500px">Delete</div><div class="ab" style="left:1566px">Usage</div></div><div class="tr" style="top:526px;background:#ffffff"><div class="td" style="left:0px;width:99px">46053</div><div class="td" style="left:99px;width:150px">889887</div><div class="td" style="left:249px;width:200px">CreditBookHoldingAccount</div><div class="td" style="left:449px;width:200px"></div><div class="td" style="left:649px;width:130px"></div><div class="td" style="left:779px;width:100px">228068</div><div class="td" style="left:879px;width:100px">Patrick</div><div class="td" style="left:979px;width:100px">Hamilton</div><div class="td dl" style="left:1079px;width:59px">16 Apr 20:</div><div class="td" style="left:1138px;width:58px"></div><div class="td" style="left:1196px;width:100px">$&nbsp; 60.00</div><div class="td" style="left:1296px;width:100px">Open</div><div class="td" style="left:1396px;width:270px"></div><div class="ab" style="left:1437px">View</div><div class="ab del" style="left:1500px">Delete</div><div class="ab" style="left:1566px">Usage</div></div><div class="tr" style="top:557px;background:#f4f4f4"><div class="td" style="left:0px;width:99px">46029</div><div class="td" style="left:99px;width:150px">Olive Glenn Test</div><div class="td" style="left:249px;width:200px">CreditBookHoldingAccount</div><div class="td" style="left:449px;width:200px"></div><div class="td" style="left:649px;width:130px"></div><div class="td" style="left:779px;width:100px"></div><div class="td" style="left:879px;width:100px"></div><div class="td" style="left:979px;width:100px"></div><div class="td dl" style="left:1079px;width:59px">27 Mar 20</div><div class="td" style="left:1138px;width:58px"></div><div class="td" style="left:1196px;width:100px">$&nbsp; 950.00</div><div class="td" style="left:1296px;width:100px">Open</div><div class="td" style="left:1396px;width:270px"></div><div class="ab" style="left:1437px">View</div><div class="ab del" style="left:1500px">Delete</div><div class="ab" style="left:1566px">Usage</div></div><div class="tr" style="top:588px;background:#ffffff"><div class="td" style="left:0px;width:99px"></div><div class="td" style="left:99px;width:150px"></div><div class="td" style="left:249px;width:200px"></div><div class="td" style="left:449px;width:200px"></div><div class="td" style="left:649px;width:130px"></div><div class="td" style="left:779px;width:100px"></div><div class="td" style="left:879px;width:100px"></div><div class="td" style="left:979px;width:100px"></div><div class="td dl" style="left:1079px;width:59px"></div><div class="td" style="left:1138px;width:58px"></div><div class="td" style="left:1196px;width:100px"></div><div class="td" style="left:1296px;width:100px"></div><div class="td" style="left:1396px;width:270px"></div><div class="ab" style="left:1437px">View</div><div class="ab del" style="left:1500px">Delete</div><div class="ab" style="left:1566px">Usage</div></div><div id="sbtrack"><div id="sbthumb"></div></div></div><div id="totals"><span id="tl">Totals :</span><span id="tv">$12,533.16</span></div><div id="pages">Total Pages : 2 | Page : 1</div><div id="export"><svg width="60" height="30" viewBox="0 0 60 30" style="position:absolute;left:0;top:0"><g stroke="#eee" fill="none" stroke-width="1.3"><rect x="20.8" y="8.5" width="18.1" height="14" rx="1.5"/><line x1="20.8" y1="12.7" x2="38.9" y2="12.7"/><line x1="26.3" y1="7" x2="26.3" y2="9.6"/><line x1="33.3" y1="7" x2="33.3" y2="9.6"/><path d="M24 16.3 H25 M27 16.3 H35.1 M24 18.7 H25 M27 18.7 H35.1" stroke-width="1"/></g></svg><span>Export All</span></div><svg id="arrows" width="1919" height="920" viewBox="0 0 1919 920" style="position:absolute;left:0;top:0;pointer-events:none"><defs><filter id="sh" x="-50%" y="-50%" width="200%" height="200%"><feDropShadow dx="-1" dy="2" stdDeviation="1.5" flood-color="#000" flood-opacity="0.35"/></filter></defs><g fill="#fc4242" filter="url(#sh)"><path d="M362.8 75.7 L381.5 113.5" stroke="#fc4242" stroke-width="7" stroke-linecap="round"/><path d="M372 119 L392.7 107.8 L392.7 134.3 Z"/><path d="M1468.3 166.7 L1485.5 143" stroke="#fc4242" stroke-width="7" stroke-linecap="round"/><path d="M1476.7 134.3 L1499.9 122.2 L1496 148 Z"/></g></svg>
</body></html>
